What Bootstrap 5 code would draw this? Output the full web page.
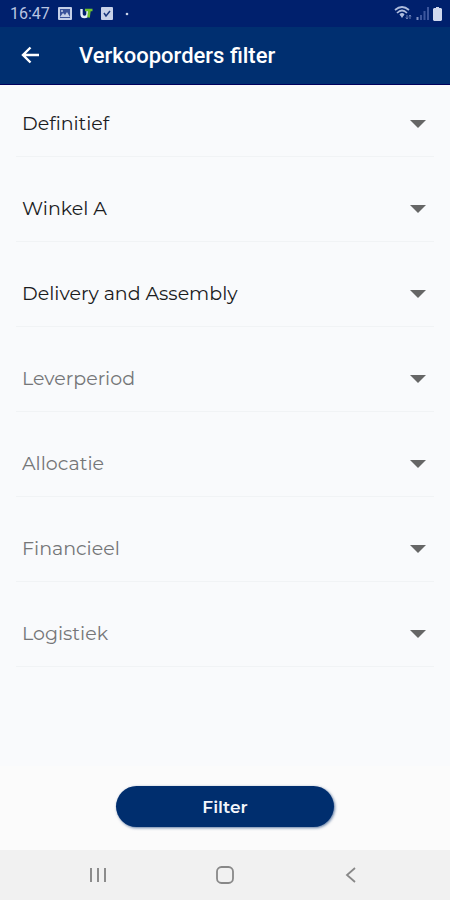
<!DOCTYPE html>
<html lang="nl">
<head>
<meta charset="utf-8">
<meta name="viewport" content="width=device-width, initial-scale=1">
<title>Verkooporders filter</title>
<link href="https://cdn.jsdelivr.net/npm/bootstrap@5.3.0/dist/css/bootstrap.min.css" rel="stylesheet">
<style>
body { background: #fbfbfb; font-family: Montserrat, Inter, "Open Sans", sans-serif; }
.status-bar { background: #00206d; color: #b9c5e2; height: 27px; padding: 0 8px 0 10px; font: 16px/27px Roboto, sans-serif; }
.app-bar { background: #002f70; height: 58px; padding: 0 20px; border-bottom: 1px solid #00005c; font-family: Roboto, sans-serif; }
.app-title { font-size: 22px; line-height: 28px; font-weight: 500; margin-left: 37px; }
.filters { padding: 7px 16px 0; gap: 20px; background: #f9fafc; }
.filter-select { height: 65px; padding: 0 48px 0 6px; border: 0; border-bottom: 1px solid #f1f3f5; background-color: transparent; font-size: 19px; line-height: 28px; color: #1b1c1e;
  background-image: url("data:image/svg+xml,%3Csvg xmlns='http://www.w3.org/2000/svg' viewBox='0 0 16 8'%3E%3Cpath fill='%23666' d='M0 0h16L8 8z'/%3E%3C/svg%3E"); background-size: 16px 8px; background-position: right 8px center; }
.filter-select.unset { color: #757678; }
.submit-row { padding: 20px 0 23px; }
.btn-filter { width: 48.5%; height: 41px; background: #002e6e; color: #f4f6fb; font-size: 17px; line-height: 24px; font-weight: 600; box-shadow: 1px 1px 3px #002e6ea0; }
.btn-filter:hover { background: #003d8f; color: #fff; }
.system-bar { background: #f1f1f1; height: 50px; padding: 0 35px; }
</style>
<script defer src="https://cdn.jsdelivr.net/npm/bootstrap@5.3.0/dist/js/bootstrap.bundle.min.js"></script>
</head>
<body class="d-flex flex-column min-vh-100">
<div class="status-bar d-flex align-items-center">
  <span>16:47</span>
  <svg class="ms-2" width="14" height="13" viewBox="0 0 14 13" aria-hidden="true"><rect width="14" height="13" rx="1" fill="#c5cfe8"/><path d="M2 2h10v9H2z" fill="#3a529a"/><path d="M2 10l3-4 2 2 2-3 3 5z" fill="#c5cfe8"/><circle cx="4" cy="4" r="1" fill="#c5cfe8"/></svg>
  <svg class="ms-2" width="13" height="11" viewBox="0 0 13 11" aria-hidden="true"><path d="M1.500 1v5q0 3 3 3T7.500 6V3" fill="none" stroke="#e4eef8" stroke-width="2.400"/><path d="M5 2h7.500M9.500 2L8.500 9.500" fill="none" stroke="#70c22e" stroke-width="2.600"/></svg>
  <svg class="ms-2" width="12" height="13" viewBox="0 0 12 13" aria-hidden="true"><rect width="12" height="13" rx="1" fill="#c8d2e9"/><path d="M3 6l2 3 4-5" fill="none" stroke="#18367d" stroke-width="1.500"/></svg>
  <svg class="ms-2" width="12" height="4" viewBox="0 0 12 4" aria-hidden="true"><circle cx="6" cy="2" r="1.300" fill="#ccd5ea"/></svg>
  <svg class="ms-auto" width="18" height="15" viewBox="0 0 18 15" aria-hidden="true"><path d="M1 4q7-6 14 0M3 7q5-5 10 0M6 9q2-2 4 0" fill="none" stroke="#aebcdd" stroke-width="1.700"/><path d="M6 9h4l-2 3z" fill="#aebcdd"/><path d="M13 9v4M11.800 11.500L13 13l1-1.500M16 13V9M15 10.500L16 9l1 1.500" fill="none" stroke="#8193c4" stroke-width=".8"/></svg>
  <svg class="ms-1" width="13" height="13" viewBox="0 0 13 13" aria-hidden="true"><path d="M1.500 13v-3" stroke="#8193c4" stroke-width="2"/><path d="M5 13V8M8.500 13V4M12 13V0" stroke="#3c569d" stroke-width="2"/></svg>
  <svg class="ms-1" width="9" height="14" viewBox="0 0 9 14" aria-hidden="true"><path d="M3 0h3v1h2l1 1v11l-1 1H1l-1-1V2l1-1h2z" fill="#d0d9ef"/></svg>
</div>
<header class="app-bar d-flex align-items-center text-white">
  <button type="button" class="btn p-0 border-0 d-flex text-white" aria-label="Terug">
    <svg width="22" height="20" viewBox="0 0 22 20" aria-hidden="true"><path d="M19 9H3M10.500 1.500L3 9l7.500 7.500" fill="none" stroke="currentColor" stroke-width="2.400"/></svg>
  </button>
  <h1 class="app-title mb-0">Verkooporders filter</h1>
</header>
<form class="d-flex flex-column flex-grow-1">
  <div class="filters d-flex flex-column flex-grow-1">
    <select class="form-select rounded-0 filter-select" aria-label="Status"><option>Definitief</option></select>
    <select class="form-select rounded-0 filter-select" aria-label="Winkel"><option>Winkel A</option></select>
    <select class="form-select rounded-0 filter-select" aria-label="Levering"><option>Delivery and Assembly</option></select>
    <select class="form-select rounded-0 filter-select unset" aria-label="Leverperiod"><option value="">Leverperiod</option></select>
    <select class="form-select rounded-0 filter-select unset" aria-label="Allocatie"><option value="">Allocatie</option></select>
    <select class="form-select rounded-0 filter-select unset" aria-label="Financieel"><option value="">Financieel</option></select>
    <select class="form-select rounded-0 filter-select unset" aria-label="Logistiek"><option value="">Logistiek</option></select>
  </div>
  <div class="submit-row d-flex justify-content-center">
    <button type="submit" class="btn btn-filter rounded-pill border-0 p-0">Filter</button>
  </div>
</form>
<nav class="system-bar d-flex align-items-center justify-content-around" aria-label="Systeem">
  <button type="button" class="btn border-0 p-0 d-flex" aria-label="Recente apps"><svg width="18" height="16" viewBox="0 0 18 16" aria-hidden="true"><path d="M2 1v14M9 1v14M16 1v14" stroke="#8c8c8c" stroke-width="2"/></svg></button>
  <button type="button" class="btn border-0 p-0 d-flex" aria-label="Startscherm"><svg width="18" height="18" viewBox="0 0 18 18" aria-hidden="true"><rect x="1" y="1" width="16" height="16" rx="4.500" fill="none" stroke="#888" stroke-width="1.800"/></svg></button>
  <button type="button" class="btn border-0 p-0 d-flex" aria-label="Vorige"><svg width="18" height="16" viewBox="0 0 18 16" aria-hidden="true"><path d="M12 1L4 8l8 7" fill="none" stroke="#888" stroke-width="1.800"/></svg></button>
</nav>
</body>
</html>
